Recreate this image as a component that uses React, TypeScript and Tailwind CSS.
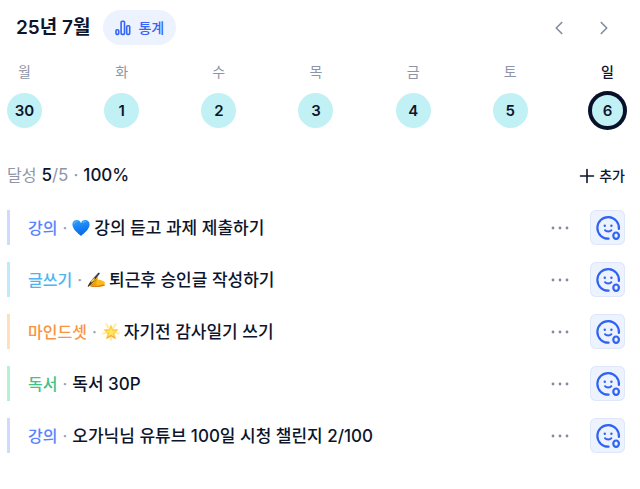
import { useState } from "react";
import { ChevronLeft, ChevronRight } from "lucide-react";
import clsx from "clsx";

type Day = { label: string; date: number };

type Task = {
  id: number;
  category: string;
  title: string;
  tone: keyof typeof TONES;
  emoji?: "heart" | "writing" | "star";
};

const TONES = {
  blue: { bar: "bg-[#d0daff]", text: "text-[#5b83ff]" },
  sky: { bar: "bg-[#bdeafd]", text: "text-[#4cb4f3]" },
  orange: { bar: "bg-[#ffe0bb]", text: "text-[#f99440]" },
  green: { bar: "bg-[#b4f1d7]", text: "text-[#41c288]" },
};

const DAYS: Day[] = [
  { label: "월", date: 30 },
  { label: "화", date: 1 },
  { label: "수", date: 2 },
  { label: "목", date: 3 },
  { label: "금", date: 4 },
  { label: "토", date: 5 },
  { label: "일", date: 6 },
];

const TASKS: Task[] = [
  { id: 1, category: "강의", title: "강의 듣고 과제 제출하기", tone: "blue", emoji: "heart" },
  { id: 2, category: "글쓰기", title: "퇴근후 승인글 작성하기", tone: "sky", emoji: "writing" },
  { id: 3, category: "마인드셋", title: "자기전 감사일기 쓰기", tone: "orange", emoji: "star" },
  { id: 4, category: "독서", title: "독서 30P", tone: "green" },
  { id: 5, category: "강의", title: "오가닉님 유튜브 100일 시청 챌린지 2/100", tone: "blue" },
];

function StatsIcon() {
  return (
    <svg width="16" height="16" viewBox="0 0 16 16" fill="none" stroke="currentColor" strokeWidth="1.6" aria-hidden="true">
      <rect x="1" y="9.8" width="2.7" height="4.6" rx="0.9" />
      <rect x="6.1" y="1.2" width="3.4" height="13.2" rx="1.1" />
      <rect x="11.7" y="5.8" width="3" height="8.6" rx="1" />
    </svg>
  );
}

function SmileIcon() {
  return (
    <svg width="35" height="35" viewBox="0 0 35 35" fill="none" stroke="#2f63f0" strokeWidth="2.2" strokeLinecap="round" aria-hidden="true">
      <path d="M18.6 28.7A10.8 10.8 0 1 1 28.9 19" />
      <path d="M15 20.2c1.5 1.7 4.9 1.7 6.4 0" strokeWidth="2" />
      <circle cx="14.8" cy="15.7" r="1.2" fill="#2f63f0" stroke="none" />
      <circle cx="21.4" cy="15.7" r="1.2" fill="#2f63f0" stroke="none" />
      <ellipse cx="26.1" cy="25.7" rx="2.8" ry="3.2" />
    </svg>
  );
}

function HeartEmoji() {
  return (
    <svg width="18" height="18" viewBox="0 0 17 17" role="img" aria-label="파란 하트">
      <defs>
        <linearGradient id="heart" x1="0" y1="0" x2="0.3" y2="1">
          <stop offset="0" stopColor="#2fa0fb" />
          <stop offset="1" stopColor="#0868ed" />
        </linearGradient>
      </defs>
      <path d="M8.5 16C5.5 13.4.4 9.6.4 5.2.4 2.6 2.2 1 4.4 1c1.9 0 3.4 1.1 4.1 2.9C9.2 2.1 10.7 1 12.6 1c2.2 0 4 1.6 4 4.2 0 4.4-5.1 8.2-8.1 10.8Z" fill="url(#heart)" />
      <path d="M2 4.6C2.3 3 3.3 2.2 4.8 2.2M10.5 3.4c.6-.8 1.5-1.2 2.5-1.1" stroke="#67c2ff" strokeWidth="1" strokeLinecap="round" fill="none" opacity="0.7" />
    </svg>
  );
}

function WritingEmoji() {
  return (
    <svg width="18" height="18" viewBox="0 0 19 17" role="img" aria-label="글 쓰는 손">
      <path d="M2.5 14.5c-1-.5-1.1-1.7-.2-2.4L6 7.8l4.2-2.5c.9-.4 1.7.1 1.6 1l-1.2 1.9 3.3.1 4.9 2.2-.3 4.2-5.300.8-5 .5c-2.300.1-4.700-.5-5.700-1.500Z" fill="#fbb91c" />
      <path d="M3 14.700c2 1.500 5.700 1.500 10.200.9l5.300-.9.1-1.500c-4.100.5-8 1.900-12.100 1.200-1.500-.2-2.600-.4-3.500.3Z" fill="#d97c12" />
      <path d="M5.600 11.200c1.300-1 2.600-1.200 3.900-.6M5.300 13.400c1.500-.9 3-.9 4.200-.3M10.600 8.200l-2.100.9" stroke="#cf7710" strokeWidth="0.9" strokeLinecap="round" fill="none" />
      <path d="M11.700 1.200c.8-.7 2-.2 1.700.8L5.100 12.200l-3.500 3.300-.8.200.2-1.100 2.300-3.900Z" fill="#343236" />
      <path d="m6 7.500 5-5.200" stroke="#85828a" strokeWidth="0.7" strokeLinecap="round" />
      <path d="M4.300 9.500c1.200-1.500 2.600-2.600 4.200-3.100l-.7 2.100-3 2.900Z" fill="#ffd34a" />
    </svg>
  );
}

function StarEmoji() {
  return (
    <svg width="18" height="18" viewBox="0 0 17 17" role="img" aria-label="빛나는 별">
      <g stroke="#ffedaa" strokeWidth="2" strokeLinecap="round">
        <path d="m4.200 1.200 1.700 3M12.800 1.200l-1.700 3M1.100 10l3-.8M15.900 10l-3-.8M8.500 16v-2.500" />
      </g>
      <path d="m8.500 1.800 1.700 4.200 5 .4-3.700 3.400 1.600 5.200-4.600-2.700-4.600 2.700 1.600-5.200-3.700-3.400 5-.4Z" fill="#ffc738" stroke="#ffd25a" strokeWidth="0.6" strokeLinejoin="round" />
      <path d="m8.500 4.400 1.100 2.800 3.100.4-2.400 2.100.8 3-2.600-1.600-2.600 1.600.8-3-2.400-2.100 3.100-.4Z" fill="#ffe65f" />
      <path d="m5 14.100 3.500-2.200 3.500 2.200" stroke="#f5a53a" strokeWidth="1" fill="none" />
    </svg>
  );
}

const EMOJIS = { heart: HeartEmoji, writing: WritingEmoji, star: StarEmoji };

function TaskRow({ task }: { task: Task }) {
  const tone = TONES[task.tone];
  const Emoji = task.emoji ? EMOJIS[task.emoji] : null;

  return (
    <li className="flex h-[35px] items-center">
      <span className={clsx("w-[3px] self-stretch", tone.bar)} />
      <div className="ml-[18px] flex min-w-0 flex-1 items-baseline gap-1 text-base leading-7 font-medium">
        <span className={tone.text}>{task.category}</span>
        <span className="px-px text-[#9ca2b3]">·</span>
        {Emoji && (
          <span className="self-center">
            <Emoji />
          </span>
        )}
        <span className="truncate text-[17px]">{task.title}</span>
      </div>
      <button type="button" aria-label="더보기" className="flex h-6 w-6 items-center justify-center text-[#858b9f]">
        <svg width="18" height="4" viewBox="0 0 18 4" fill="currentColor" aria-hidden="true">
          <circle cx="2" cy="2" r="1.4" />
          <circle cx="9" cy="2" r="1.4" />
          <circle cx="16" cy="2" r="1.4" />
        </svg>
      </button>
      <button type="button" aria-label="스티커" className="ml-[18px] shrink-0 rounded-md bg-[#edf2ff] inset-ring inset-ring-[#dfe7fd]">
        <SmileIcon />
      </button>
    </li>
  );
}

export default function App() {
  const [selected, setSelected] = useState(6);

  return (
    <main className="min-h-screen bg-white pt-[10px] pr-[15px] pl-[7px] font-['Inter','Noto_Sans_CJK_KR',sans-serif] text-[#0d152c]">
      <header className="flex h-[35px] items-center pl-[9px]">
        <h1 className="text-[19px] leading-[31px] font-semibold">25년 7월</h1>
        <button type="button" className="ml-[13px] flex h-full items-center gap-[7px] rounded-full bg-[#edf2ff] px-3 text-sm font-medium text-[#3566f6]">
          <StatsIcon />
          통계
        </button>
        <nav className="mr-[9px] ml-auto flex gap-[21px] text-[#858b9f]">
          <button type="button" aria-label="이전 주" className="flex h-6 w-6 items-center justify-center">
            <ChevronLeft size={22} strokeWidth={1.8} />
          </button>
          <button type="button" aria-label="다음 주" className="flex h-6 w-6 items-center justify-center">
            <ChevronRight size={22} strokeWidth={1.8} />
          </button>
        </nav>
      </header>

      <div className="mt-[17px] flex justify-between">
        {DAYS.map((day) => (
          <label key={day.date} className="flex w-[35px] cursor-pointer flex-col items-center gap-[11px] text-sm">
            <span className={clsx("leading-5", day.date === selected ? "font-medium" : "text-[#8f95a8]")}>{day.label}</span>
            <input
              type="radio"
              name="day"
              className="sr-only"
              checked={day.date === selected}
              onChange={() => setSelected(day.date)}
            />
            <span
              className={clsx(
                "flex h-[35px] w-[35px] items-center justify-center rounded-full bg-[#c2f1f5] text-[15px] font-semibold",
                day.date === selected && "border-2 border-[#08102a] ring-2 ring-[#08102a]"
              )}
            >
              {day.date}
            </span>
          </label>
        ))}
      </div>

      <section className="mt-9">
        <div className="flex h-6 items-center justify-between">
          <p className="flex items-baseline gap-[5px] text-[17px] text-[#8f95a8]">
            <span className="text-base">달성</span>
            <span>
              <span className="font-medium text-[#0d152c]">5</span>/5
            </span>
            <span>·</span>
            <span className="font-medium text-[#0d152c]">100%</span>
          </p>
          <button type="button" className="flex items-center gap-1 text-sm font-medium">
            <svg width="16" height="16" viewBox="0 0 16 16" fill="none" stroke="currentColor" strokeWidth="1.6" strokeLinecap="round" aria-hidden="true">
              <path d="M8 1.5v13M1.5 8h13" />
            </svg>
            추가
          </button>
        </div>

        <ul className="mt-[22px] flex flex-col gap-[17px]">
          {TASKS.map((task) => (
            <TaskRow key={task.id} task={task} />
          ))}
        </ul>
      </section>
    </main>
  );
}
